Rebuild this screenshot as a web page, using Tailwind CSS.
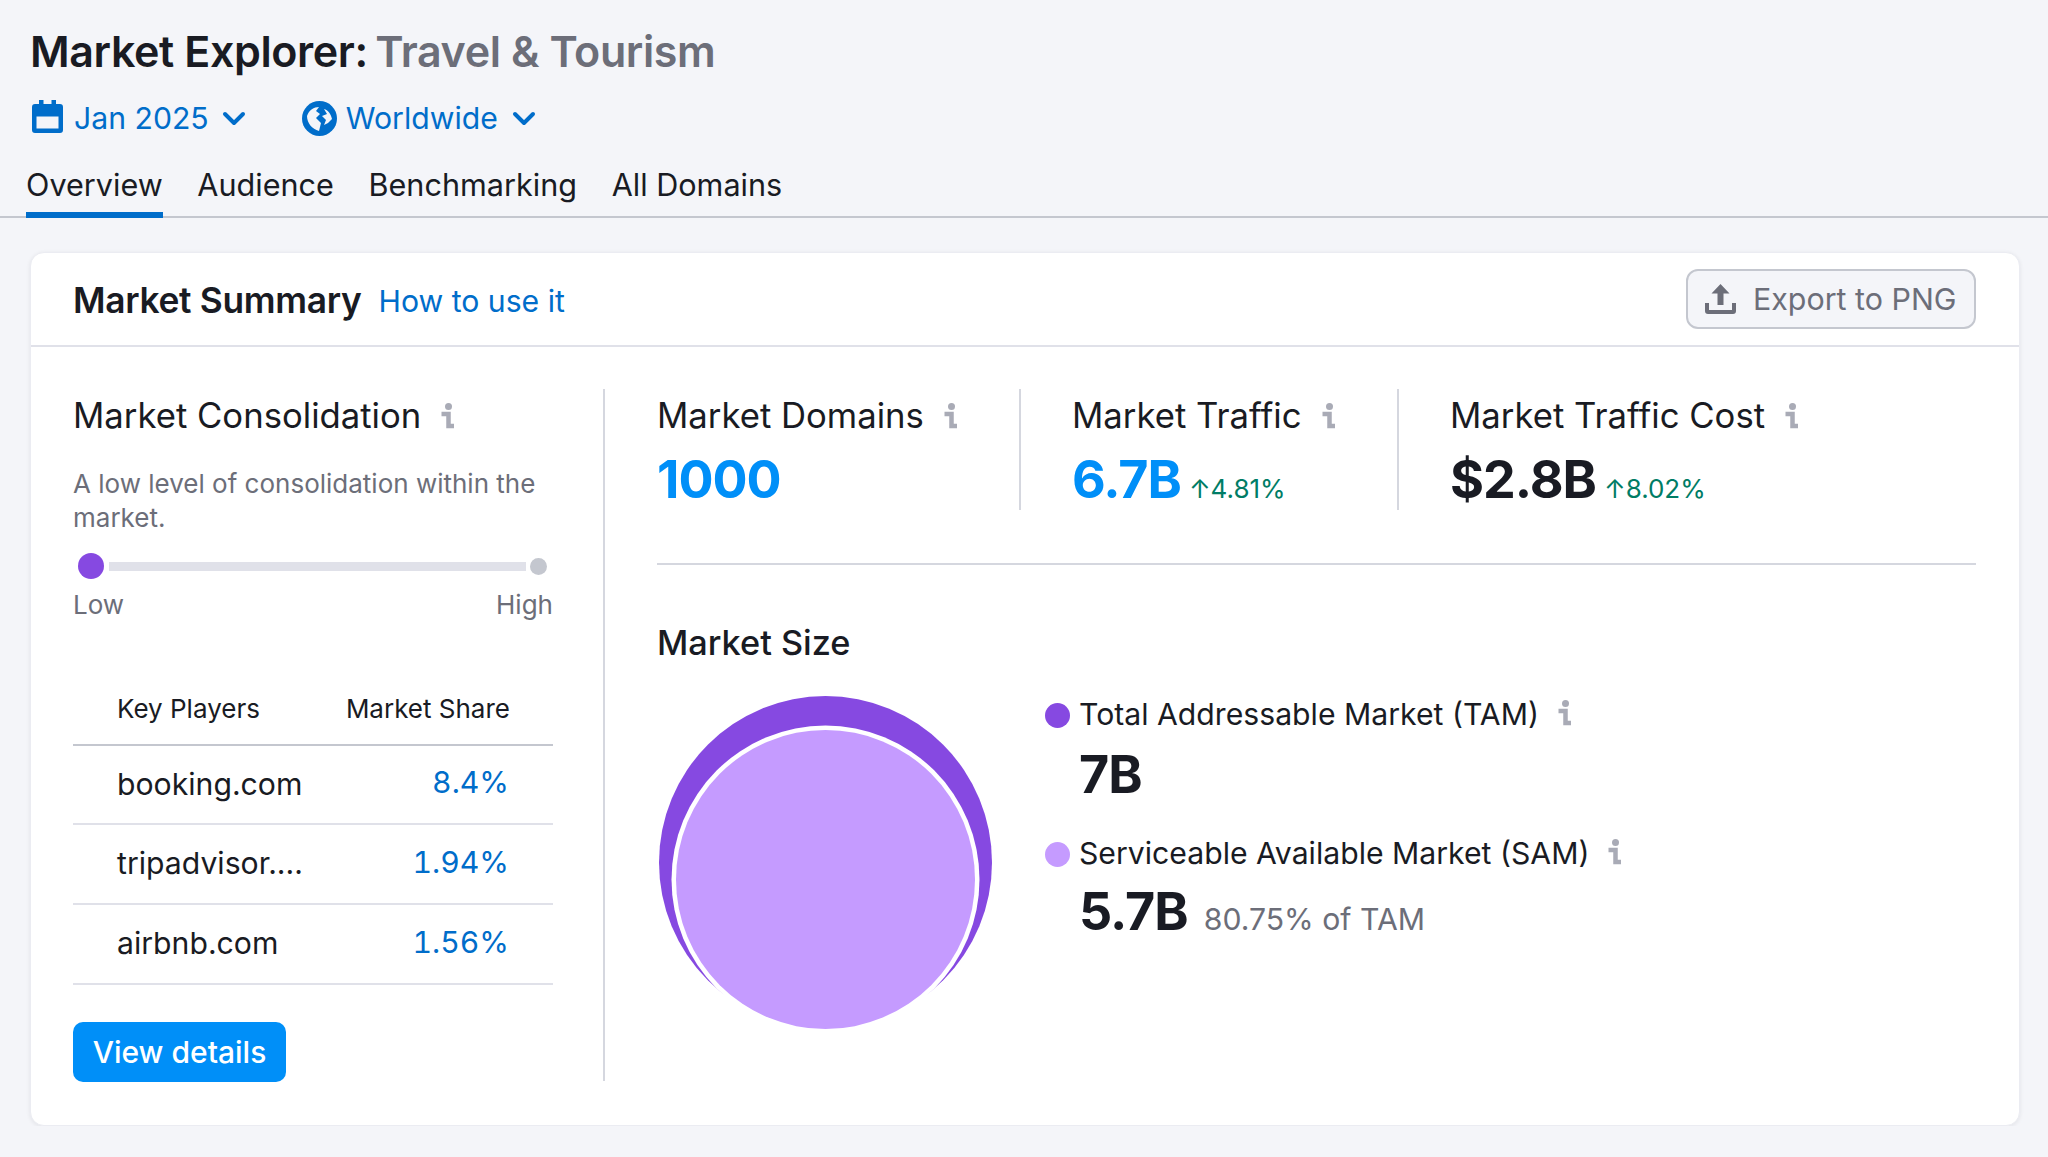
<!DOCTYPE html>
<html lang="en">
<head>
  <meta charset="UTF-8" />
  <title>Market Explorer: Travel &amp; Tourism</title>
  <script src="https://cdn.jsdelivr.net/npm/@tailwindcss/browser@4"></script>
</head>
<body class="bg-[#f4f5f9] text-[#191b23] font-['Inter',sans-serif] antialiased overflow-hidden">

  <!-- HEADER -->
  <header class="border-b-2 border-[#c4c7cf] h-[218px]">
    <h1 class="pl-[30px] pt-[26px] text-[43px] leading-[50px] font-semibold tracking-[-0.4px]">
      Market Explorer: <span class="-ml-[3px] text-[#6c6e79]">Travel &amp; Tourism</span>
    </h1>

    <div class="mt-[22px] h-[40px] pl-[32px] flex items-center text-[#006dca] text-[30.200px]">
      <svg class="mb-[4px] w-[31px] h-[33px]" viewBox="0 0 31 33" fill="#006dca">
        <path fill-rule="evenodd" d="M7 0h4.500v4h8V0H24v4h4a3 3 0 0 1 3 3v23a3 3 0 0 1-3 3H3a3 3 0 0 1-3-3V7a3 3 0 0 1 3-3h4zM4.500 16.500v12h22v-12z"/>
      </svg>
      <span class="ml-[11px] mt-[1px]">Jan 2025</span>
      <svg class="ml-[13px] w-[24px] h-[15px]" viewBox="0 0 24 15" fill="none" stroke="#006dca" stroke-width="4" stroke-linecap="round" stroke-linejoin="round">
        <path d="M3 3l9 9 9-9"/>
      </svg>
      <svg class="ml-[56px] w-[35px] h-[35px]" viewBox="0 0 35 35">
        <circle cx="17.500" cy="17.500" r="17.500" fill="#006dca"/>
        <path d="M5 15C7 9 12 6 17 6l-3 4 4 3-4 4 5 5-2 8C10 28 5 22 5 15zM22 8c4 1 7 5 8 10l-4 4-4 2 2-5-4-4 5-2z" fill="#f4f5f9"/>
      </svg>
      <span class="ml-[9px] mt-[1px]">Worldwide</span>
      <svg class="ml-[14px] w-[24px] h-[15px]" viewBox="0 0 24 15" fill="none" stroke="#006dca" stroke-width="4" stroke-linecap="round" stroke-linejoin="round">
        <path d="M3 3l9 9 9-9"/>
      </svg>
    </div>

    <nav class="mt-[17px] pl-[26px] flex gap-[34.600px] text-[30.600px] leading-[60px]">
      <a class="h-[63px] border-b-[6px] border-[#006dca]">Overview</a>
      <a class="h-[63px]">Audience</a>
      <a class="h-[63px]">Benchmarking</a>
      <a class="h-[63px]">All Domains</a>
    </nav>
  </header>

  <!-- CARD -->
  <main class="mt-[34px] ml-[30px] w-[1990px] h-[874px] bg-white rounded-[14px] border border-[#ebecf2] shadow-[0_1px_4px_rgba(25,27,35,0.08)]">
    <div class="h-[94px] border-b-2 border-[#e0e1e9] pl-[42px] pr-[43px] flex items-center">
      <h2 class="mt-[5px] text-[35.300px] font-semibold tracking-[-0.3px]">Market Summary</h2>
      <a class="ml-[17px] mt-[6px] text-[30.200px] text-[#006dca]">How to use it</a>
      <button class="ml-auto w-[290px] h-[60px] rounded-[12px] border-2 border-[#c4c7cf] bg-[#f4f5f9] text-[#6c6e79] text-[30.400px] flex items-center pl-[17px]">
        <svg class="w-[31px] h-[30px]" viewBox="0 0 31 30" fill="#6c6e79">
          <path d="M15.500 0l9 9.500h-6V21h-6V9.500h-6zM0 19h4v7h23v-7h4v8a3 3 0 0 1-3 3H3a3 3 0 0 1-3-3z"/>
        </svg>
        <span class="ml-[17px] mt-[1px]">Export to PNG</span>
      </button>
    </div>

    <div class="pt-[42px] pl-[42px] flex">
      <!-- LEFT -->
      <section class="w-[532px] h-[692px] border-r-2 border-[#d5d7df] pr-[50px]">
        <div class="h-[52px] flex items-center text-[34.700px]">
          Market Consolidation
          <svg class="ml-[20px] mt-[2px] w-[13px] h-[26px]" viewBox="0 0 13 26"><circle cx="7.500" cy="3.500" r="3.500" fill="#a9abb6"/><path d="M.5 11h7v12H13" fill="none" stroke="#a9abb6" stroke-width="4.500"/></svg>
        </div>
        <p class="mt-[26px] text-[26px] leading-[34px] text-[#6c6e79]">A low level of consolidation within the market.</p>

        <div class="mt-[18px] h-[26px] flex items-center pl-[5px] pr-[6px]">
          <span class="w-[26px] h-[26px] rounded-full bg-[#8649e1]"></span>
          <span class="ml-[5px] flex-1 h-[9px] bg-[#e0e1e9]"></span>
          <span class="ml-[4px] w-[17px] h-[17px] rounded-full bg-[#c4c7cf]"></span>
        </div>
        <div class="mt-[9px] flex justify-between text-[26px] leading-[34px] text-[#6c6e79]">
          <span>Low</span><span>High</span>
        </div>

        <table class="mt-[49px] w-full">
          <thead>
            <tr class="h-[74px] border-b-2 border-[#c4c7cf] text-[26px]">
              <th class="pl-[44px] pt-[1px] font-normal text-left">Key Players</th>
              <th class="pr-[43px] pt-[1px] font-normal text-right">Market Share</th>
            </tr>
          </thead>
          <tbody class="text-[30.200px]">
            <tr class="h-[79px] border-b-2 border-[#e0e1e9]">
              <td class="pl-[44px]">booking.com</td>
              <td class="pr-[44px] pb-[3px] text-right text-[#006dca] tabular-nums">8.4%</td>
            </tr>
            <tr class="h-[80px] border-b-2 border-[#e0e1e9]">
              <td class="pl-[44px]">tripadvisor....</td>
              <td class="pr-[44px] pb-[3px] text-right text-[#006dca] tabular-nums">1.94%</td>
            </tr>
            <tr class="h-[80px] border-b-2 border-[#e0e1e9]">
              <td class="pl-[44px]">airbnb.com</td>
              <td class="pr-[44px] pb-[3px] text-right text-[#006dca] tabular-nums">1.56%</td>
            </tr>
          </tbody>
        </table>

        <button class="mt-[37px] w-[213px] h-[60px] rounded-[10px] bg-[#008ff8] text-white text-[30px] font-medium">View details</button>
      </section>

      <!-- RIGHT -->
      <section class="pl-[52px] w-[1372px]">
        <div class="h-[121px] flex">
          <div class="w-[364px] border-r-2 border-[#d5d7df]">
            <div class="h-[52px] flex items-center text-[34.700px]">
              Market Domains
              <svg class="ml-[20px] mt-[2px] w-[13px] h-[26px]" viewBox="0 0 13 26"><circle cx="7.500" cy="3.500" r="3.500" fill="#a9abb6"/><path d="M.5 11h7v12H13" fill="none" stroke="#a9abb6" stroke-width="4.500"/></svg>
            </div>
            <div class="mt-[9px] text-[52px] leading-[60px] font-bold text-[#008ff8] tracking-[-1px]">1000</div>
          </div>
          <div class="w-[378px] pl-[51px] border-r-2 border-[#d5d7df]">
            <div class="h-[52px] flex items-center text-[34.700px]">
              Market Traffic
              <svg class="ml-[20px] mt-[2px] w-[13px] h-[26px]" viewBox="0 0 13 26"><circle cx="7.500" cy="3.500" r="3.500" fill="#a9abb6"/><path d="M.5 11h7v12H13" fill="none" stroke="#a9abb6" stroke-width="4.500"/></svg>
            </div>
            <div class="mt-[9px] flex items-baseline leading-[60px]">
              <span class="text-[52px] font-bold text-[#008ff8] tracking-[-1px]">6.7B</span>
              <span class="ml-[8px] text-[26px] text-[#007c65]">↑4.81%</span>
            </div>
          </div>
          <div class="pl-[51px]">
            <div class="h-[52px] flex items-center text-[34.700px]">
              Market Traffic Cost
              <svg class="ml-[20px] mt-[2px] w-[13px] h-[26px]" viewBox="0 0 13 26"><circle cx="7.500" cy="3.500" r="3.500" fill="#a9abb6"/><path d="M.5 11h7v12H13" fill="none" stroke="#a9abb6" stroke-width="4.500"/></svg>
            </div>
            <div class="mt-[9px] flex items-baseline leading-[60px]">
              <span class="text-[52px] font-bold tracking-[-1px]">$2.8B</span>
              <span class="ml-[8px] text-[26px] text-[#007c65]">↑8.02%</span>
            </div>
          </div>
        </div>

        <div class="mt-[53px] w-[1319px] border-t-2 border-[#d5d7df]"></div>

        <h3 class="mt-[52px] h-[52px] flex items-center text-[34.300px] font-medium">Market Size</h3>

        <div class="mt-[27px] flex">
          <svg class="ml-[2px] w-[336px] h-[334px]" viewBox="0 0 336 334">
            <circle cx="166.500" cy="166.500" r="166.500" fill="#8649e1"/>
            <circle cx="166.500" cy="183.500" r="154" fill="#fff"/>
            <circle cx="166.500" cy="183.500" r="149.500" fill="#c59bff"/>
          </svg>

          <div class="ml-[50px]">
            <div class="h-[38px] flex items-center text-[30.200px]">
              <span class="w-[25px] h-[25px] rounded-full bg-[#8649e1]"></span>
              <span class="ml-[9px]">Total Addressable Market (TAM)</span>
              <svg class="ml-[19px] mb-[4px] w-[13px] h-[26px]" viewBox="0 0 13 26"><circle cx="7.500" cy="3.500" r="3.500" fill="#a9abb6"/><path d="M.5 11h7v12H13" fill="none" stroke="#a9abb6" stroke-width="4.500"/></svg>
            </div>
            <div class="mt-[11px] pl-[34px] text-[52px] leading-[60px] font-bold tracking-[-1px]">7B</div>
            <div class="mt-[30px] h-[38px] flex items-center text-[30.200px]">
              <span class="w-[25px] h-[25px] rounded-full bg-[#c59bff]"></span>
              <span class="ml-[9px]">Serviceable Available Market (SAM)</span>
              <svg class="ml-[19px] mb-[4px] w-[13px] h-[26px]" viewBox="0 0 13 26"><circle cx="7.500" cy="3.500" r="3.500" fill="#a9abb6"/><path d="M.5 11h7v12H13" fill="none" stroke="#a9abb6" stroke-width="4.500"/></svg>
            </div>
            <div class="mt-[9px] pl-[34px] flex items-baseline leading-[60px]">
              <span class="text-[52px] font-bold tracking-[-1px]">5.7B</span>
              <span class="ml-[16px] text-[30.200px] text-[#6c6e79]">80.75% of TAM</span>
            </div>
          </div>
        </div>
      </section>
    </div>
  </main>
</body>
</html>
